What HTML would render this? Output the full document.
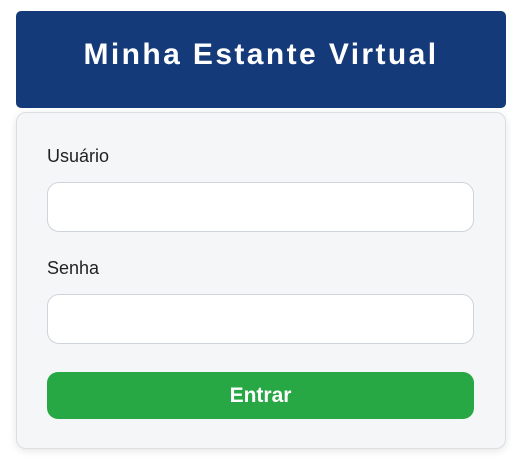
<!DOCTYPE html>
<html><head><meta charset="utf-8"><style>
*{box-sizing:border-box;margin:0;padding:0}
body{width:522px;height:462px;background:#fff;font-family:"Liberation Sans",sans-serif;position:relative;overflow:hidden}
.hdr{position:absolute;left:16px;top:11px;width:490px;height:97px;background:#153a7a;border-radius:5px;color:#fff;font-weight:bold;font-size:30px;letter-spacing:2.4px;text-align:center;line-height:88px}
.card{position:absolute;left:16px;top:112px;width:490px;height:337px;background:#f5f6f8;border:1px solid #dcdee2;border-radius:10px;box-shadow:0 2px 8px rgba(0,0,0,.1)}
.lbl{position:absolute;left:30px;font-size:18px;color:#222}
.inp{position:absolute;left:30px;width:427px;height:50px;background:#fff;border:1px solid #ced4da;border-radius:12px}
.btn{position:absolute;left:30px;top:259px;width:427px;height:47px;background:#28a745;border-radius:11px;color:#fff;font-weight:bold;font-size:21px;text-align:center;line-height:47px}
</style></head><body>
<div class="hdr">Minha Estante Virtual</div>
<div class="card">
<div class="lbl" style="top:33px">Usuário</div>
<div class="inp" style="top:69px"></div>
<div class="lbl" style="top:145px">Senha</div>
<div class="inp" style="top:181px"></div>
<div class="btn">Entrar</div>
</div>
</body></html>
